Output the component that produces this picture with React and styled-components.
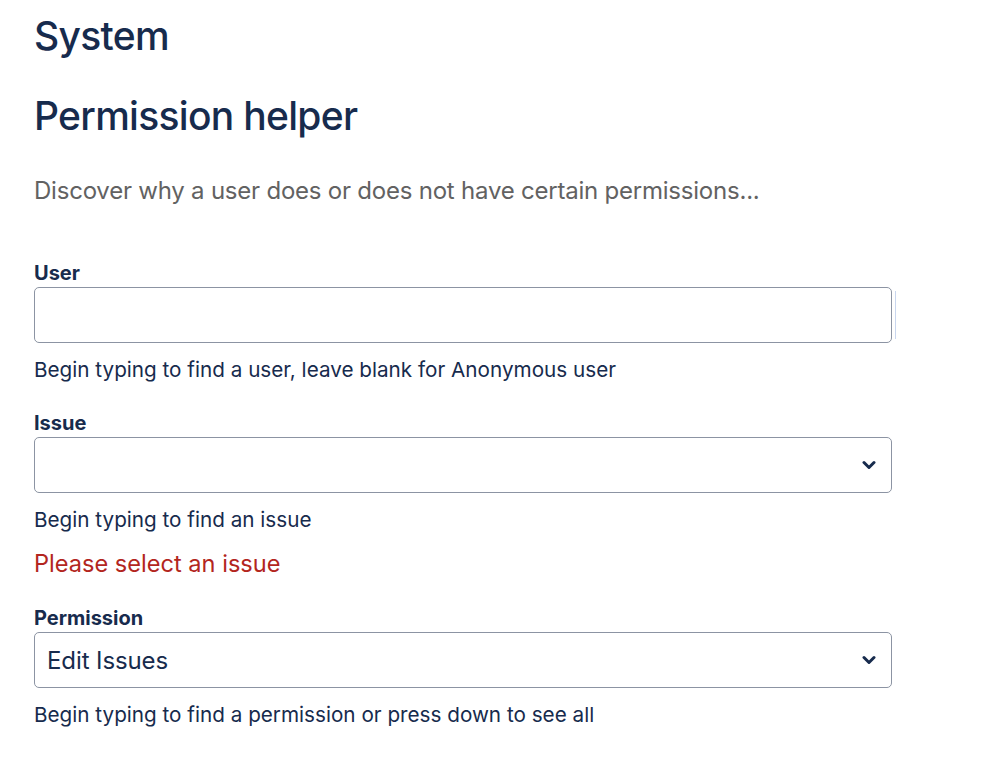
import React from "react";
import styled, { createGlobalStyle } from "styled-components";

const Global = createGlobalStyle`
  html, body { margin: 0; padding: 0; background: #fff; }
  body { font-family: Inter, "Noto Sans", sans-serif; color: #172B4D; }
  * { box-sizing: border-box; }
`;

const Page = styled.div`
  padding: 12px 0 0 34px;
  width: 999px;
  display: flex;
  flex-direction: column;
`;

const Title = styled.h1`
  margin: 0;
  font-size: 39px;
  line-height: 48px;
  font-weight: 500;
  letter-spacing: -0.7px;
  color: #172B4D;
`;

const SubTitle = styled(Title).attrs({ as: "h2" })`
  margin-top: 32px;
`;

const Description = styled.p`
  margin: 36px 0 0;
  font-size: 24px;
  line-height: 30px;
  color: #626262;
  letter-spacing: -0.22px;
`;

const Form = styled.form`
  margin-top: 55px;
  display: flex;
  flex-direction: column;
  width: 858px;
`;

const Field = styled.div`
  display: flex;
  flex-direction: column;
  margin-bottom: ${(p) => p.$gap || 29}px;
`;

const Label = styled.label`
  font-size: 20px;
  line-height: 24px;
  font-weight: 700;
  color: #172B4D;
  margin-bottom: 2px;
`;

const Control = styled.div`
  position: relative;
  height: 56px;
  border: 1px solid #8C94A3;
  border-radius: 5px;
  background: #fff;
  display: flex;
  align-items: center;
  padding: 0 12px;
  font-size: 24px;
  letter-spacing: -0.1px;
  color: #172B4D;
`;

const SideMark = styled.span`
  position: absolute;
  right: -5px;
  top: 3px;
  bottom: 3px;
  width: 1px;
  background: #C9D6EE;
`;

const Chevron = styled.svg`
  position: absolute;
  right: 15px;
  top: 50%;
  transform: translateY(-50%);
`;

const Help = styled.div`
  margin-top: 15px;
  font-size: 20.7px;
  line-height: 24px;
  color: #172B4D;
`;

const Error = styled.div`
  margin-top: 17px;
  font-size: 23.6px;
  line-height: 30px;
  color: #B3261E;
`;

const ChevronIcon = () => (
  <Chevron width="14" height="10" viewBox="0 0 14 10">
    <path d="M2 2.5 L7 7.5 L12 2.5" fill="none" stroke="#172B4D" strokeWidth="3" strokeLinecap="round" strokeLinejoin="round" />
  </Chevron>
);

export default function App() {
  return (
    <>
      <Global />
      <Page>
        <Title>System</Title>
        <SubTitle>Permission helper</SubTitle>
        <Description>Discover why a user does or does not have certain permissions...</Description>
        <Form>
          <Field>
            <Label>User</Label>
            <Control>
              <SideMark />
            </Control>
            <Help>Begin typing to find a user, leave blank for Anonymous user</Help>
          </Field>
          <Field $gap={27}>
            <Label>Issue</Label>
            <Control>
              <ChevronIcon />
            </Control>
            <Help>Begin typing to find an issue</Help>
            <Error>Please select an issue</Error>
          </Field>
          <Field>
            <Label>Permission</Label>
            <Control>
              Edit Issues
              <ChevronIcon />
            </Control>
            <Help>Begin typing to find a permission or press down to see all</Help>
          </Field>
        </Form>
      </Page>
    </>
  );
}
